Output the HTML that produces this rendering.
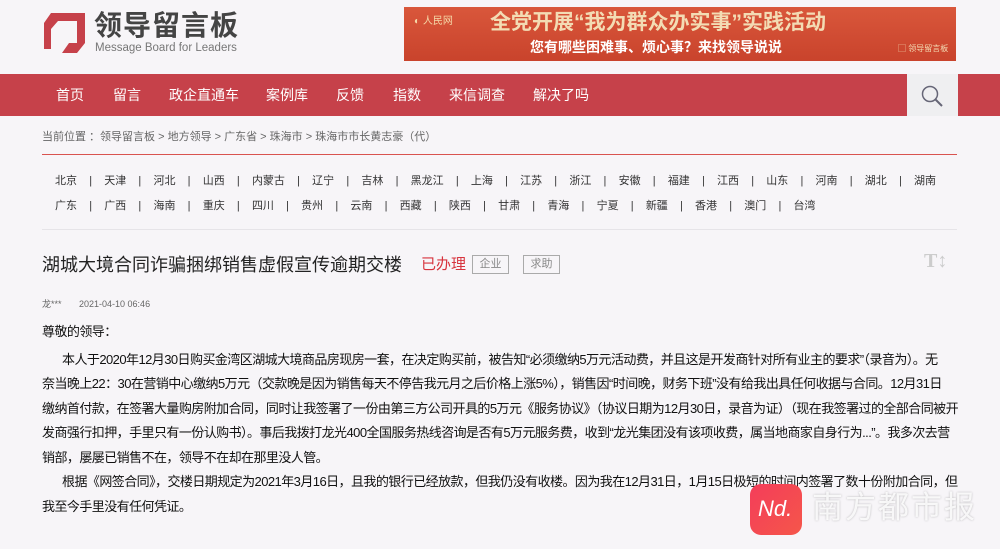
<!DOCTYPE html>
<html><head><meta charset="utf-8"><style>
*{margin:0;padding:0;box-sizing:border-box}
body{width:1000px;height:549px;overflow:hidden;background:#f7f5f8;font-family:"Liberation Sans","Noto Sans CJK SC",sans-serif;position:relative;color:#222}
.abs{position:absolute}
.nav{left:0;top:74px;width:1000px;height:42px;background:#c6414a}
.nav span{position:absolute;top:12px;color:#fff;font-size:14px;line-height:18px}
.prov{font-size:11px;color:#333;white-space:nowrap;line-height:14px}
.prov b{font-weight:normal;margin:0 12.2px}
.txt{left:42px;top:320px;width:960px;font-size:13px;line-height:24.5px;color:#111;white-space:nowrap}
.txt div{letter-spacing:-0.56px}
</style></head><body>
<svg class="abs" style="left:44px;top:13px" width="42" height="42" viewBox="0 0 42 42"><path d="M7 0H41V30L33 40H18L25 30H33V8H14L7 16V36H0V10Z" fill="#c6414a"/></svg>
<div class="abs" style="left:94px;top:9px;font-size:28px;font-weight:bold;color:#444;letter-spacing:1px;line-height:34px">领导留言板</div>
<div class="abs" style="left:95px;top:42px;font-size:11.5px;color:#777;line-height:13px">Message Board for Leaders</div>
<div class="abs" style="left:404px;top:7px;width:552px;height:54px;background:linear-gradient(#d9573b,#c9432c)"></div>
<div class="abs" style="left:414px;top:12px;font-size:10px;color:#f5d8a8">◐ 人民网</div>
<div class="abs" style="left:490px;top:10px;font-size:21px;font-weight:bold;color:#f3dcb4;line-height:26px">全党开展“我为群众办实事”实践活动</div>
<div class="abs" style="left:530px;top:38px;font-size:14px;font-weight:bold;color:#fff;line-height:18px">您有哪些困难事、烦心事？来找领导说说</div>
<div class="abs" style="left:898px;top:43px;font-size:8px;color:#f3dcb4">▢ 领导留言板</div>
<div class="abs nav"></div>
<div class="abs nav" style="background:none">
<span style="left:56px">首页</span><span style="left:113px">留言</span><span style="left:169px">政企直通车</span><span style="left:266px">案例库</span><span style="left:336px">反馈</span><span style="left:393px">指数</span><span style="left:449px">来信调查</span><span style="left:533px">解决了吗</span>
<div style="position:absolute;left:907px;top:0;width:51px;height:42px;background:#efeff1"></div>
<svg style="position:absolute;left:920px;top:10px" width="26" height="24" viewBox="0 0 26 24"><circle cx="10" cy="10" r="7.5" fill="none" stroke="#667" stroke-width="1.5"/><path d="M15.5 15.5L22 22" stroke="#667" stroke-width="2"/></svg>
</div>
<div class="abs" style="left:42px;top:128px;font-size:11px;color:#666">当前位置 ：领导留言板 &gt; 地方领导 &gt; 广东省 &gt; 珠海市 &gt; 珠海市市长黄志豪（代）</div>
<div class="abs" style="left:42px;top:154px;width:915px;height:1px;background:#d9534f"></div>
<div class="abs prov" style="left:55px;top:174px">北京<b>|</b>天津<b>|</b>河北<b>|</b>山西<b>|</b>内蒙古<b>|</b>辽宁<b>|</b>吉林<b>|</b>黑龙江<b>|</b>上海<b>|</b>江苏<b>|</b>浙江<b>|</b>安徽<b>|</b>福建<b>|</b>江西<b>|</b>山东<b>|</b>河南<b>|</b>湖北<b>|</b>湖南</div>
<div class="abs prov" style="left:55px;top:199px">广东<b>|</b>广西<b>|</b>海南<b>|</b>重庆<b>|</b>四川<b>|</b>贵州<b>|</b>云南<b>|</b>西藏<b>|</b>陕西<b>|</b>甘肃<b>|</b>青海<b>|</b>宁夏<b>|</b>新疆<b>|</b>香港<b>|</b>澳门<b>|</b>台湾</div>
<div class="abs" style="left:42px;top:229px;width:915px;height:1px;background:#e6e4e8"></div>
<div class="abs" style="left:42px;top:254px;font-size:18px;color:#222;line-height:22px">湖城大境合同诈骗捆绑销售虚假宣传逾期交楼</div>
<div class="abs" style="left:421px;top:256px;font-size:15px;color:#d7333d;line-height:18px">已办理</div>
<div class="abs" style="left:472px;top:255px;width:37px;height:19px;border:1px solid #aaa;font-size:11px;color:#888;text-align:center;line-height:17px">企业</div>
<div class="abs" style="left:523px;top:255px;width:37px;height:19px;border:1px solid #aaa;font-size:11px;color:#888;text-align:center;line-height:17px">求助</div>
<div class="abs" style="left:924px;top:250px;font-size:20px;color:#ccc;font-family:'Liberation Serif',serif;font-weight:bold">T↕</div>
<div class="abs" style="left:42px;top:297px;font-size:9px;color:#666">龙***&nbsp;&nbsp;&nbsp;&nbsp;&nbsp;&nbsp;&nbsp;2021-04-10 06:46</div>
<div class="abs txt">
<div style="margin-bottom:3px">尊敬的领导：</div>
<div style="padding-left:20px">本人于2020年12月30日购买金湾区湖城大境商品房现房一套，在决定购买前，被告知“必须缴纳5万元活动费，并且这是开发商针对所有业主的要求”（录音为）。无</div>
<div>奈当晚上22：30在营销中心缴纳5万元（交款晚是因为销售每天不停告我元月之后价格上涨5%），销售因“时间晚，财务下班”没有给我出具任何收据与合同。12月31日</div>
<div>缴纳首付款，在签署大量购房附加合同，同时让我签署了一份由第三方公司开具的5万元《服务协议》（协议日期为12月30日，录音为证）（现在我签署过的全部合同被开</div>
<div>发商强行扣押，手里只有一份认购书）。事后我拨打龙光400全国服务热线咨询是否有5万元服务费，收到“龙光集团没有该项收费，属当地商家自身行为...”。我多次去营</div>
<div>销部，屡屡已销售不在，领导不在却在那里没人管。</div>
<div style="padding-left:20px">根据《网签合同》，交楼日期规定为2021年3月16日，且我的银行已经放款，但我仍没有收楼。因为我在12月31日，1月15日极短的时间内签署了数十份附加合同，但</div>
<div>我至今手里没有任何凭证。</div>
</div>
<div class="abs" style="left:750px;top:484px;width:52px;height:51px;border-radius:11px;background:linear-gradient(135deg,#f43d5a,#f5564a)"></div>
<div class="abs" style="left:758px;top:497px;font-size:22px;color:#fff;font-style:italic;line-height:24px">Nd.</div>
<div class="abs" style="left:812px;top:490px;font-size:31px;color:rgba(255,255,255,.85);letter-spacing:2px;line-height:36px;text-shadow:0 0 2px rgba(0,0,0,.25)">南方都市报</div>
</body></html>
